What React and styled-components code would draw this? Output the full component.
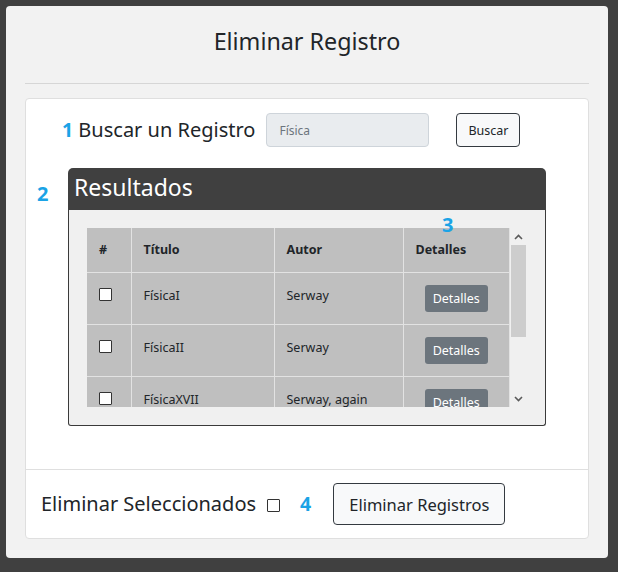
import styled, { createGlobalStyle } from "styled-components";

const GlobalStyle = createGlobalStyle`
    * { box-sizing: border-box; }
    body {
        margin: 0;
        background: #404040;
        font-family: "Noto Sans", "Open Sans", sans-serif;
        color: #212529;
    }
`;

const rows = [
    { titulo: "FísicaI", autor: "Serway" },
    { titulo: "FísicaII", autor: "Serway" },
    { titulo: "FísicaXVII", autor: "Serway, again" },
    { titulo: "FísicaXVIII", autor: "Serway" },
];

// flechas de la barra de desplazamiento
const Chevron = ({ up }) => (
    <svg width="9" height="6" viewBox="0 0 9 6">
        <path
            d={up ? "M1 5 L4.5 1.5 L8 5" : "M1 1 L4.5 4.5 L8 1"}
            fill="none"
            stroke="#5a5a5a"
            strokeWidth="1.6"
        />
    </svg>
);

function App() {
    return (
        <Page>
            <GlobalStyle />
            <Panel>
                <Title>Eliminar Registro</Title>
                <Rule />
                <Card>
                    <CardBody>
                        {/* busqueda */}
                        <SearchRow>
                            <Label><Num>1</Num> Buscar un Registro</Label>
                            <SearchInput placeholder="Física" readOnly />
                            <LightButton $size="12.5px" $pad="0 11px" $h="34px">Buscar</LightButton>
                        </SearchRow>

                        {/* resultados */}
                        <Results>
                            <Badge $left="-31px" $top="12px">2</Badge>
                            <Badge $left="374px" $top="43px">3</Badge>
                            <ResultsHead>Resultados</ResultsHead>
                            <ResultsBody>
                                <Viewport>
                                    <TableClip>
                                        <Table>
                                            <thead>
                                                <tr>
                                                    <Th $w="44px">#</Th>
                                                    <Th $w="143px">Título</Th>
                                                    <Th $w="129px">Autor</Th>
                                                    <Th>Detalles</Th>
                                                </tr>
                                            </thead>
                                            <tbody>
                                                {rows.map((r) => (
                                                    <tr key={r.titulo}>
                                                        <Td><Check type="checkbox" $fill="#fff" /></Td>
                                                        <Td>{r.titulo}</Td>
                                                        <Td>{r.autor}</Td>
                                                        <Td $center><DetailButton>Detalles</DetailButton></Td>
                                                    </tr>
                                                ))}
                                            </tbody>
                                        </Table>
                                    </TableClip>
                                    <ScrollBar>
                                        <Arrow><Chevron up /></Arrow>
                                        <Track><Thumb /></Track>
                                        <Arrow><Chevron /></Arrow>
                                    </ScrollBar>
                                </Viewport>
                            </ResultsBody>
                        </Results>
                    </CardBody>

                    {/* pie */}
                    <CardFooter>
                        <Label>Eliminar Seleccionados</Label>
                        <Check type="checkbox" $fill="transparent" />
                        <Num>4</Num>
                        <LightButton $size="16.5px" $pad="0 15px" $h="42px">Eliminar Registros</LightButton>
                    </CardFooter>
                </Card>
            </Panel>
        </Page>
    );
}

const Page = styled.div`
    padding: 6px 10px 14px 6px;
`;

const Panel = styled.div`
    width: 602px;
    height: 552px;
    background: #f2f2f2;
    border-radius: 4px;
    padding: 20px 19px 19px;
`;

const Title = styled.h2`
    margin: 0;
    text-align: center;
    font-weight: 400;
    font-size: 23.3px;
    line-height: 31px;
    color: #212529;
`;

const Rule = styled.hr`
    margin: 26px 0 14px;
    border: 0;
    border-top: 1px solid #d6d6d6;
`;

const Card = styled.div`
    background: #fff;
    border: 1px solid #dfdfdf;
    border-radius: 4px;
`;

const CardBody = styled.div`
    padding: 14px 42px 43px;
`;

const SearchRow = styled.div`
    display: flex;
    align-items: center;
    margin-left: -6px;
`;

const Label = styled.span`
    font-size: 20px;
    line-height: 28px;
    color: #212529;
`;

const Num = styled.span`
    font-weight: 700;
    font-size: 19.5px;
    line-height: 28px;
    color: #1ba3e6;
`;

const SearchInput = styled.input`
    width: 163px;
    height: 34px;
    margin: 0 27px 0 11px;
    padding: 0 12px;
    background: #e9ecef;
    border: 1px solid #ced4da;
    border-radius: 4px;
    font-family: inherit;
    font-size: 12px;
    outline: none;
    &::placeholder { color: #6c757d; }
`;

const LightButton = styled.button`
    height: ${(p) => p.$h};
    padding: ${(p) => p.$pad};
    background: #f8f9fa;
    border: 1px solid #343a40;
    border-radius: 4px;
    font-family: inherit;
    font-size: ${(p) => p.$size};
    color: #212529;
`;

const Results = styled.div`
    position: relative;
    margin-top: 21px;
`;

const Badge = styled(Num)`
    position: absolute;
    left: ${(p) => p.$left};
    top: ${(p) => p.$top};
    font-size: 20px;
`;

const ResultsHead = styled.div`
    height: 42px;
    padding: 0 6px;
    background: #404040;
    border-radius: 5px 5px 0 0;
    color: #fff;
    font-size: 23px;
    line-height: 38px;
`;

const ResultsBody = styled.div`
    padding: 18px;
    background: #f0f0f0;
    border: 1px solid #3a3a3a;
    border-top: 0;
    border-radius: 0 0 3px 3px;
`;

const Viewport = styled.div`
    display: flex;
    height: 179px;
`;

const TableClip = styled.div`
    flex: 1;
    overflow: hidden;
`;

const ScrollBar = styled.div`
    width: 17px;
    display: flex;
    flex-direction: column;
    background: #f0f0f0;
`;

const Arrow = styled.div`
    height: 17px;
    display: flex;
    align-items: center;
    justify-content: center;
`;

const Track = styled.div`
    flex: 1;
`;

const Thumb = styled.div`
    height: 92px;
    margin: 0 1px;
    background: #cdcdcd;
`;

const Table = styled.table`
    width: 100%;
    border-collapse: collapse;
    background: #bfbfbf;
    font-size: 12.5px;
    color: #212529;
`;

const Th = styled.th`
    width: ${(p) => p.$w || "auto"};
    padding: 12px;
    text-align: left;
    font-weight: 700;
    line-height: 20px;
    border: 1px solid #e2e2e2;
    border-top: 0;
    border-left: 0;
    vertical-align: top;
`;

const Td = styled.td`
    padding: 12px;
    border: 1px solid #e2e2e2;
    border-left: 0;
    vertical-align: top;
    text-align: ${(p) => (p.$center ? "center" : "left")};
    line-height: ${(p) => (p.$center ? "0" : "21px")};
`;

const Check = styled.input`
    appearance: none;
    display: block;
    width: 13px;
    height: 13px;
    margin: 3px 0 0;
    background: ${(p) => p.$fill};
    border: 1px solid #333;
    border-radius: 1px;
`;

const DetailButton = styled.button`
    display: inline-block;
    height: 27px;
    padding: 0 8px;
    background: #6c757d;
    border: 0;
    border-radius: 3px;
    color: #fff;
    font-family: inherit;
    font-size: 12.5px;
    line-height: 27px;
`;

const CardFooter = styled.div`
    display: flex;
    align-items: center;
    height: 69px;
    padding: 0 15px;
    border-top: 1px solid #dfdfdf;

    ${Check} { margin: 2px 20px 0 11px; }
    ${Num} { margin-right: 22px; }
`;

export default App;
